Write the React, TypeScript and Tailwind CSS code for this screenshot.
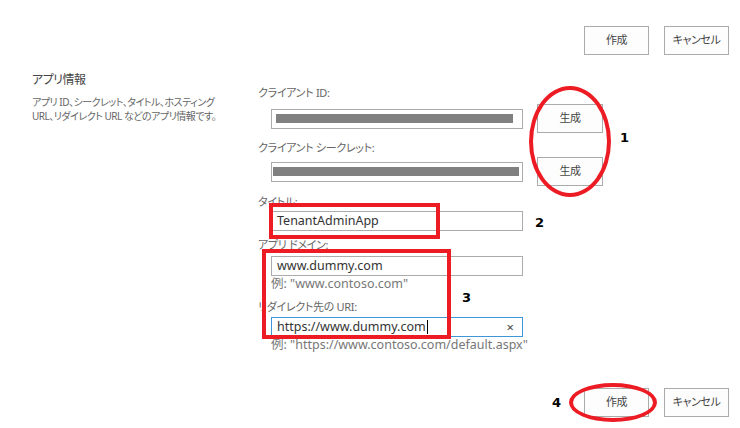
const jp = "font-['Noto_Sans','Noto_Sans_CJK_JP',sans-serif] [font-feature-settings:'palt']"

function Btn({ label, className = '' }: { label: string; className?: string }) {
  return (
    <div
      className={`flex items-center justify-center border border-[#ababab] bg-[#fdfdfd] text-[11px] tracking-[-0.4px] text-[#444] ${className}`}
    >
      {label}
    </div>
  )
}

function Label({ text, className = '' }: { text: string; className?: string }) {
  return (
    <div className={`h-[16px] text-[11px] leading-[16px] tracking-[-0.3px] text-[#666] ${className}`}>{text}</div>
  )
}

function Redacted({ width }: { width: number }) {
  return (
    <div className="ml-[13px] flex h-[20px] w-[252px] items-center border border-[#ababab] bg-white px-[4px]">
      <div className="h-[9px] bg-[#808080]" style={{ width }} />
    </div>
  )
}

function TextBox({ value, active = false }: { value: string; active?: boolean }) {
  return (
    <div
      className={`ml-[13px] flex h-[20px] w-[252px] items-center border bg-white pl-[5px] pr-[8px] text-[12.5px] text-[#333] ${
        active ? 'border-[#3d96d8]' : 'border-[#ababab]'
      }`}
    >
      <span>{value}</span>
      {active && <span className="ml-[1px] h-[14px] w-px bg-black" />}
      {active && <span className="ml-auto text-[13px] leading-none text-[#444]">×</span>}
    </div>
  )
}

function Num({ n, className }: { n: string; className: string }) {
  return (
    <div
      className={`absolute font-['DejaVu_Sans',sans-serif] text-[13px] font-bold leading-none text-black ${className}`}
    >
      {n}
    </div>
  )
}

export default function App() {
  return (
    <div className={`relative h-[428px] w-[740px] overflow-hidden bg-white ${jp}`}>
      <div className="flex justify-end gap-[15px] pr-[11px] pt-[26px]">
        <Btn label="作成" className="h-[29px] w-[65px]" />
        <Btn label="キャンセル" className="h-[29px] w-[65px]" />
      </div>

      <div className="mt-[16px] flex">
        <div className="w-[258px] pl-[32px]">
          <div className="text-[12px] leading-[18px] tracking-[-0.5px] text-[#444]">アプリ情報</div>
          <div className="mt-[6px] text-[10px] leading-[14px] tracking-[-0.5px] text-[#666]">
            アプリ ID、シークレット、タイトル、ホスティング
            <br />
            URL、リダイレクト URL などのアプリ情報です。
          </div>
        </div>

        <div className="flex flex-col pt-[14px]">
          <Label text="クライアント ID:" />
          <div className="mt-[3px] flex items-center">
            <Redacted width={237} />
            <Btn label="生成" className="ml-[14px] h-[29px] w-[66px]" />
          </div>

          <Label text="クライアント シークレット:" className="mt-[7px]" />
          <div className="mt-[1px] flex items-center">
            <div className="ml-[13px] flex h-[20px] w-[252px] items-center border border-[#ababab] bg-white pl-[1px]">
              <div className="h-[9px] w-[246px] bg-[#808080]" />
            </div>
            <Btn label="生成" className="ml-[14px] h-[29px] w-[66px]" />
          </div>

          <Label text="タイトル:" className="mt-[8px]" />
          <div className="mt-[1px]">
            <TextBox value="TenantAdminApp" />
          </div>

          <Label text="アプリ ドメイン:" className="mt-[6px]" />
          <div className="mt-[3px]">
            <TextBox value="www.dummy.com" />
          </div>
          <div className="ml-[13px] text-[12.5px] leading-[15px] text-[#777]">例: "www.contoso.com"</div>

          <Label text="リダイレクト先の URI:" className="mt-[8px]" />
          <div className="mt-[2px]">
            <TextBox value="https://www.dummy.com" active />
          </div>
          <div className="ml-[13px] text-[12.5px] leading-[15px] text-[#777]">
            例: "https://www.contoso.com/default.aspx"
          </div>
        </div>
      </div>

      <div className="flex justify-end gap-[15px] pr-[11px] pt-[36px]">
        <Btn label="作成" className="h-[29px] w-[65px]" />
        <Btn label="キャンセル" className="h-[29px] w-[65px]" />
      </div>

      {/* annotations */}
      <div className="absolute left-[529px] top-[86px] h-[111px] w-[82px] rounded-[50%] border-[4px] border-[#ed1c24]" />
      <div className="absolute left-[269px] top-[203px] h-[36px] w-[171px] border-[4px] border-[#ed1c24]" />
      <div className="absolute left-[262px] top-[249px] h-[90px] w-[189px] border-[4px] border-[#ed1c24]" />
      <div className="absolute left-[569px] top-[383px] h-[39px] w-[88px] rounded-[50%] border-[4px] border-[#ed1c24]" />
      <Num n="1" className="left-[620px] top-[131px]" />
      <Num n="2" className="left-[535px] top-[216px]" />
      <Num n="3" className="left-[462px] top-[291px]" />
      <Num n="4" className="left-[552px] top-[396px]" />
    </div>
  )
}
